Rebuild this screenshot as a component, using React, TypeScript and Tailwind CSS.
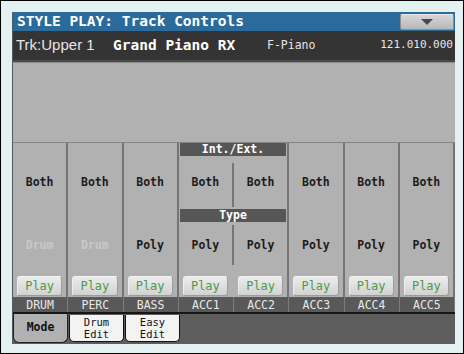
import React from 'react'

const mono = { fontFamily: '"DejaVu Sans Mono", "Liberation Mono", monospace' }

const tracks = [
  { label: 'DRUM', type: 'Drum', dim: true },
  { label: 'PERC', type: 'Drum', dim: true },
  { label: 'BASS', type: 'Poly' },
  { label: 'ACC1', type: 'Poly' },
  { label: 'ACC2', type: 'Poly' },
  { label: 'ACC3', type: 'Poly' },
  { label: 'ACC4', type: 'Poly' },
  { label: 'ACC5', type: 'Poly' },
]

function PlayButton() {
  return (
    <div className="mx-[4px] h-[20px] rounded-[3px] border border-[#9c9c9c] border-t-[#f4f4f4] border-l-[#eeeeee] bg-gradient-to-b from-[#ececec] to-[#d2d2d2] flex items-center justify-center text-[12px] text-[#4c9a4c]">
      Play
    </div>
  )
}

function Value({ text, dim }: { text: string; dim?: boolean }) {
  return (
    <span className={`text-[11.5px] font-bold ${dim ? 'text-[#c9c9c9]' : 'text-[#1c1c1c]'}`}>
      {text}
    </span>
  )
}

function Column({ type, dim }: { type: string; dim?: boolean }) {
  return (
    <div className="flex flex-col border-r-2 border-[#747474]">
      <div className="h-[13px]" />
      <div className="h-[53px] flex items-center justify-center">
        <Value text="Both" />
      </div>
      <div className="h-[13px]" />
      <div className="h-[48px] flex items-center justify-center">
        <Value text={type} dim={dim} />
      </div>
      <div className="h-[6px]" />
      <PlayButton />
    </div>
  )
}

function HeaderBar({ text }: { text: string }) {
  return (
    <div className="mx-[1px] h-[13px] bg-[#565656] flex items-center justify-center text-[11.5px] font-bold text-white">
      {text}
    </div>
  )
}

function Group() {
  return (
    <div className="col-span-2 flex flex-col border-r-2 border-[#747474]">
      <HeaderBar text="Int./Ext." />
      <div className="h-[53px] flex">
        <div className="flex-1 flex items-center justify-center">
          <Value text="Both" />
        </div>
        <div className="w-[2px] h-[44px] mt-[7px] bg-[#767676]" />
        <div className="flex-1 flex items-center justify-center">
          <Value text="Both" />
        </div>
      </div>
      <HeaderBar text="Type" />
      <div className="h-[48px] flex">
        <div className="flex-1 flex items-center justify-center">
          <Value text="Poly" />
        </div>
        <div className="w-[2px] h-[40px] mt-[3px] bg-[#767676]" />
        <div className="flex-1 flex items-center justify-center">
          <Value text="Poly" />
        </div>
      </div>
      <div className="h-[6px]" />
      <div className="flex">
        <div className="flex-1">
          <PlayButton />
        </div>
        <div className="w-[2px]" />
        <div className="flex-1">
          <PlayButton />
        </div>
      </div>
    </div>
  )
}

function Tab({ top, bottom }: { top: string; bottom: string }) {
  return (
    <div className="w-[55px] h-[27px] mt-[1px] ml-[1px] rounded-b-[5px] border border-t-0 border-[#111] bg-[#f3f3f3] flex flex-col items-center justify-center text-[10.5px] leading-[12px] text-[#111]">
      <span className="block h-[12px]">{top}</span>
      <span className="block h-[12px]">{bottom}</span>
    </div>
  )
}

export default function App() {
  return (
    <div
      className="w-[464px] h-[354px] border border-black bg-[#e3f1f1] pl-[11px] pt-[11px] pr-[8px] pb-[9px]"
      style={mono}
    >
      <div className="h-full flex flex-col border-l border-[#4d5c5c]">
        <div className="h-[19px] bg-[#2a6b9b] flex items-center">
          <span className="pl-[4px] text-[14.5px] font-bold text-white leading-none">
            STYLE PLAY: Track Controls
          </span>
          <div className="ml-auto mr-[1px] mt-[1px] w-[54px] h-[16px] rounded-[2px] bg-gradient-to-b from-[#d6d6d6] to-[#b8b8b8] border border-[#8e8e8e] border-t-[#e8e8e8] flex items-center justify-center">
            <div className="w-0 h-0 border-l-[6px] border-r-[6px] border-t-[6px] border-l-transparent border-r-transparent border-t-[#4a4a4a]" />
          </div>
        </div>
        <div className="h-[29px] bg-[#343434] flex items-center text-[#e6e6e6]">
          <span
            className="w-[100px] pl-[3px] text-[15px]"
            style={{ fontFamily: '"Liberation Sans", Arial, sans-serif' }}
          >
            Trk:Upper 1
          </span>
          <span className="w-[154px] text-[14.5px] font-bold text-white">Grand Piano RX</span>
          <span className="text-[11.5px]">F-Piano</span>
          <span className="ml-auto pr-[2px] text-[11px]">121.010.000</span>
        </div>
        <div className="h-[2px] bg-[#4a4a4a]" />
        <div className="flex-1 flex flex-col bg-[#b1b1b1]">
          <div className="h-[80px] border-t border-[#8c8c8c]" />
          <div className="h-[1px] bg-[#858585]" />
          <div className="h-[154px] grid grid-cols-8">
            <Column type="Drum" dim />
            <Column type="Drum" dim />
            <Column type="Poly" />
            <Group />
            <Column type="Poly" />
            <Column type="Poly" />
            <Column type="Poly" />
          </div>
          <div className="h-[15px] grid grid-cols-8 bg-[#595959]">
            {tracks.map((t) => (
              <div
                key={t.label}
                className="flex items-center justify-center border-r border-[#7c7c7c] text-[11.5px] text-[#e8e8e8]"
              >
                {t.label}
              </div>
            ))}
          </div>
          <div className="h-[2px] bg-[#161616]" />
          <div className="flex-1 flex bg-[#5d5d5d]">
            <div className="w-[55px] h-[29px] rounded-b-[6px] border border-t-0 border-[#222] bg-[#b1b1b1] flex items-center justify-center text-[11.5px] font-bold text-[#111]">
              Mode
            </div>
            <Tab top="Drum" bottom="Edit" />
            <Tab top="Easy" bottom="Edit" />
          </div>
        </div>
      </div>
    </div>
  )
}
